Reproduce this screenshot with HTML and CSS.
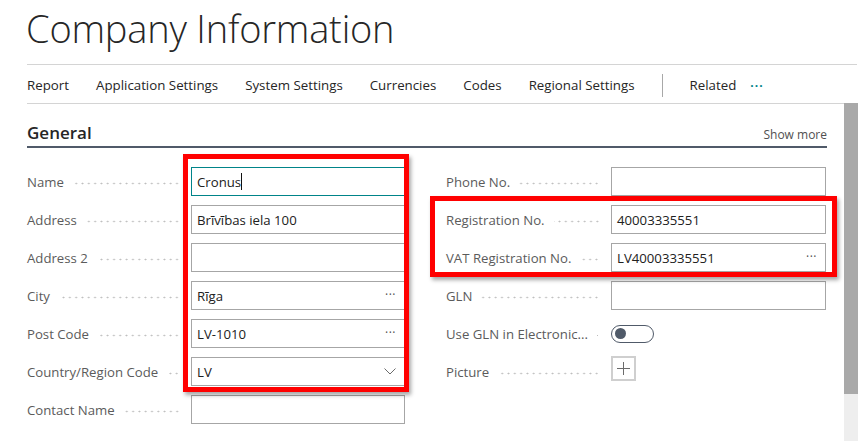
FILE: index.html
```html
<!DOCTYPE html>
<html lang="en">
<head>
<meta charset="utf-8">
<title>Company Information</title>
<link rel="stylesheet" href="styles.css">
</head>
<body>
<div class="page">
  <header class="title">Company Information</header>
  <nav class="actionbar">
    <span class="action">Report</span>
    <span class="action">Application Settings</span>
    <span class="action">System Settings</span>
    <span class="action">Currencies</span>
    <span class="action">Codes</span>
    <span class="action">Regional Settings</span>
    <span class="sep"></span>
    <span class="action">Related</span>
    <span class="more">···</span>
  </nav>
  <div class="body">
    <main class="content">
      <div class="section-head">
        <h2 class="section-title">General</h2>
        <span class="show-more">Show more</span>
      </div>
      <div class="form">
        <div class="col">
          <div class="row"><label class="lbl"><span class="lbl-text">Name</span><span class="leader"></span></label><div class="field focus"><span class="val">Cronus</span><span class="caret"></span></div></div>
          <div class="row"><label class="lbl"><span class="lbl-text">Address</span><span class="leader"></span></label><div class="field"><span class="val">Brīvības iela 100</span></div></div>
          <div class="row"><label class="lbl"><span class="lbl-text">Address 2</span><span class="leader"></span></label><div class="field"></div></div>
          <div class="row"><label class="lbl"><span class="lbl-text">City</span><span class="leader"></span></label><div class="field"><span class="val">Rīga</span><span class="ell">···</span></div></div>
          <div class="row"><label class="lbl"><span class="lbl-text">Post Code</span><span class="leader"></span></label><div class="field"><span class="val">LV-1010</span><span class="ell">···</span></div></div>
          <div class="row"><label class="lbl"><span class="lbl-text">Country/Region Code</span><span class="leader"></span></label><div class="field"><span class="val">LV</span><svg class="chev" width="12" height="7" viewBox="0 0 12 7"><path d="M0.5 0.5 L6 6 L11.5 0.5" fill="none" stroke="#6b6b6b" stroke-width="1"/></svg></div></div>
          <div class="row"><label class="lbl"><span class="lbl-text">Contact Name</span><span class="leader"></span></label><div class="field"></div></div>
        </div>
        <div class="col">
          <div class="row"><label class="lbl"><span class="lbl-text">Phone No.</span><span class="leader"></span></label><div class="field"></div></div>
          <div class="row"><label class="lbl"><span class="lbl-text">Registration No.</span><span class="leader"></span></label><div class="field"><span class="val">40003335551</span></div></div>
          <div class="row"><label class="lbl"><span class="lbl-text">VAT Registration No.</span><span class="leader"></span></label><div class="field"><span class="val">LV40003335551</span><span class="ell">···</span></div></div>
          <div class="row"><label class="lbl"><span class="lbl-text">GLN</span><span class="leader"></span></label><div class="field"></div></div>
          <div class="row"><label class="lbl"><span class="lbl-text trunc">Use GLN in Electronic...</span><span class="leader"></span></label><div class="toggle"><span class="knob"></span></div></div>
          <div class="row"><label class="lbl"><span class="lbl-text">Picture</span><span class="leader"></span></label><div class="picture"><svg width="13" height="13" viewBox="0 0 13 13"><path d="M6.5 0 V13 M0 6.5 H13" stroke="#6b6b6b" stroke-width="1"/></svg></div></div>
        </div>
        <div class="mark mark-left"></div>
        <div class="mark mark-right"></div>
      </div>
    </main>
    <div class="scrollbar"><div class="thumb"></div></div>
  </div>
</div>
</body>
</html>
```

FILE: styles.css
```css
* { box-sizing: border-box; }
html, body { margin: 0; padding: 0; background: #fff; }
body {
  font-family: "Open Sans", "Noto Sans", "Liberation Sans", sans-serif;
  color: #212121;
  width: 863px;
  height: 441px;
  overflow: hidden;
}
.page { display: flex; flex-direction: column; }

.title {
  height: 64px;
  padding: 0 0 10px 26px;
  font-size: 38px;
  font-weight: 300;
  line-height: 56px;
  letter-spacing: -0.2px;
  color: #262626;
}

.actionbar {
  margin: 0 6px 0 27px;
  height: 39px;
  padding-top: 2px;
  border-top: 1px solid #d4d4d4;
  display: flex;
  align-items: center;
  gap: 27px;
  font-size: 13.3px;
  color: #262626;
}
.action { white-space: nowrap; }
.sep { width: 1px; height: 23px; background: #a8a8a8; }
.more { color: #00838a; margin-left: -13px; letter-spacing: 1px; font-weight: 700; font-size: 12px; }

.body { display: flex; height: 338px; }
.content {
  flex: 1;
  padding: 0 17px 0 27px;
}
.content::before {
  content: "";
  display: block;
  height: 1px;
  background: #d4d4d4;
  margin-right: -17px;
}

.section-head {
  display: flex;
  justify-content: space-between;
  align-items: baseline;
  padding-top: 17px;
  padding-bottom: 1px;
  border-bottom: 2px solid #505a69;
}
.section-title {
  margin: 0;
  font-size: 17px;
  font-weight: 600;
  line-height: 24px;
  color: #262626;
}
.show-more { font-size: 12px; color: #505050; }

.form {
  position: relative;
  margin-top: 19px;
  display: grid;
  grid-template-columns: 378px 380px;
  column-gap: 41px;
}
.col { display: flex; flex-direction: column; gap: 9px; }
.row { display: flex; align-items: center; height: 29px; }
.lbl {
  flex: 0 0 auto;
  width: 164px;
  display: flex;
  align-items: center;
  padding-right: 11px;
  padding-top: 1px;
  font-size: 13.2px;
  color: #5b5b5b;
  white-space: nowrap;
}
.col + .col .lbl { width: 165px; padding-right: 11px; }
.lbl-text { flex: 0 0 auto; margin-right: 9px; }
.leader {
  flex: 1;
  height: 3px;
  margin-top: 3px;
  background-image: radial-gradient(circle, #bdbdbd 0.75px, transparent 1.1px);
  background-size: 6.3px 3px;
  background-repeat: repeat-x;
  background-position: right center;
}
.field {
  flex: 1;
  height: 29px;
  border: 1px solid #a6a6a6;
  display: flex;
  align-items: center;
  padding: 0 8px 0 5px;
  font-size: 13.2px;
  color: #212121;
  position: relative;
}
.field.focus { border-color: #008489; }
.val { flex: 0 0 auto; }
.caret { width: 1px; height: 17px; background: #111; margin-left: 0; }
.ell { margin-left: auto; color: #505050; font-size: 12px; letter-spacing: 0.5px; padding-bottom: 2px; }
.chev { margin-left: auto; margin-right: 0; }

.toggle {
  width: 43px;
  height: 18px;
  border: 1.5px solid #505a69;
  border-radius: 9px;
  display: flex;
  align-items: center;
  padding-left: 3px;
}
.knob { width: 11px; height: 11px; border-radius: 50%; background: #505a69; }

.picture {
  width: 25px;
  height: 25px;
  border: 2px solid #cfcfcf;
  display: flex;
  align-items: center;
  justify-content: center;
  align-self: flex-start;
  margin-top: -1px;
}

.mark {
  position: absolute;
  border: 5px solid #ff0000;
  box-shadow: 2px 3px 4px rgba(0, 0, 0, 0.35);
  pointer-events: none;
}
.mark-left { left: 156px; top: -13px; width: 226px; height: 238px; }
.mark-right { left: 403px; top: 29px; width: 407px; height: 81px; }

.scrollbar {
  flex: 0 0 14px;
  margin-right: 5px;
  background: #eeeeee;
}
.thumb { height: 291px; background: #a9a9a9; }
```
